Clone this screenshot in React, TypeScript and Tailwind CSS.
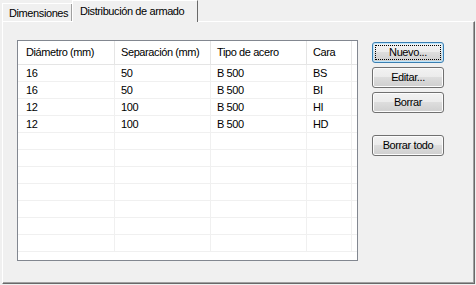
const font = { fontFamily: '"Liberation Sans", Arial, sans-serif', letterSpacing: "-0.4px" };

const columns = [
  { label: "Diámetro (mm)", width: "w-[97px]", pad: "pl-[8px]" },
  { label: "Separación (mm)", width: "w-[96px]", pad: "pl-[6px]" },
  { label: "Tipo de acero", width: "w-[96px]", pad: "pl-[6px]" },
  { label: "Cara", width: "w-[45px]", pad: "pl-[6px]" },
];

const rows: string[][] = [
  ["16", "50", "B 500", "BS"],
  ["16", "50", "B 500", "BI"],
  ["12", "100", "B 500", "HI"],
  ["12", "100", "B 500", "HD"],
  ["", "", "", ""],
  ["", "", "", ""],
  ["", "", "", ""],
  ["", "", "", ""],
  ["", "", "", ""],
  ["", "", "", ""],
  ["", "", "", ""],
];

function WinButton({
  label,
  focused,
  className = "",
}: {
  label: string;
  focused?: boolean;
  className?: string;
}) {
  return (
    <button
      type="button"
      className={`relative h-[21px] w-[72px] rounded-[3px] border text-[11px] text-black ${
        focused ? "border-[#3c7fb1] shadow-[inset_0_0_0_1px_#bde6fd]" : "border-[#707070] shadow-[inset_0_0_0_1px_#fcfcfc]"
      } bg-[linear-gradient(#f2f2f2_0%,#ebebeb_50%,#dddddd_50%,#cfcfcf_100%)] ${className}`}
    >
      {focused && (
        <span className="absolute inset-[2px] border border-dotted border-black" />
      )}
      <span className="relative">{label}</span>
    </button>
  );
}

export default function App() {
  return (
    <div
      className="flex h-[285px] w-[476px] flex-col bg-[#f0f0f0] pl-[2px] pr-[1px] pb-[1px] text-black"
      style={font}
    >
      {/* tab strip */}
      <div className="flex h-[21px] shrink-0 items-end">
        <div className="mb-[-1px] flex h-[19px] w-[70px] items-center border-t border-l border-white pl-[6px] text-[11px] shadow-[inset_-1px_0_0_#a0a0a0]">
          Dimensiones
        </div>
        <div className="relative z-10 mb-[-1px] flex h-[22px] w-[126px] items-center border-t border-l border-white border-r border-r-[#696969] bg-[#f0f0f0] pl-[7px] text-[11px]">
          Distribución de armado
        </div>
      </div>

      {/* panel */}
      <div className="flex flex-1 border-t border-l border-white border-r border-r-[#696969] border-b border-b-[#696969] shadow-[inset_-1px_-1px_0_#a0a0a0]">
        <div className="mt-[18px] ml-[14px] flex h-[221px] w-[341px] flex-col overflow-hidden border border-[#828790] bg-white text-[11px]">
          {/* header */}
          <div className="flex h-[24px] shrink-0 border-b border-[#e5e5e5]">
            {columns.map((c) => (
              <div
                key={c.label}
                className={`flex items-center border-r border-[#e5e5e5] ${c.width} ${c.pad}`}
              >
                {c.label}
              </div>
            ))}
          </div>
          {rows.map((r, i) => (
            <div key={i} className="flex h-[17px] shrink-0 border-b border-[#f0f0f0]">
              {r.map((cell, j) => (
                <div
                  key={j}
                  className={`flex items-center border-r border-[#f0f0f0] ${columns[j].width} ${columns[j].pad}`}
                >
                  {cell}
                </div>
              ))}
            </div>
          ))}
        </div>

        <div className="mt-[20px] ml-[14px] flex flex-col gap-[4px]">
          <WinButton label="Nuevo..." focused />
          <WinButton label="Editar..." />
          <WinButton label="Borrar" />
          <WinButton label="Borrar todo" className="mt-[18px]" />
        </div>
      </div>
    </div>
  );
}
